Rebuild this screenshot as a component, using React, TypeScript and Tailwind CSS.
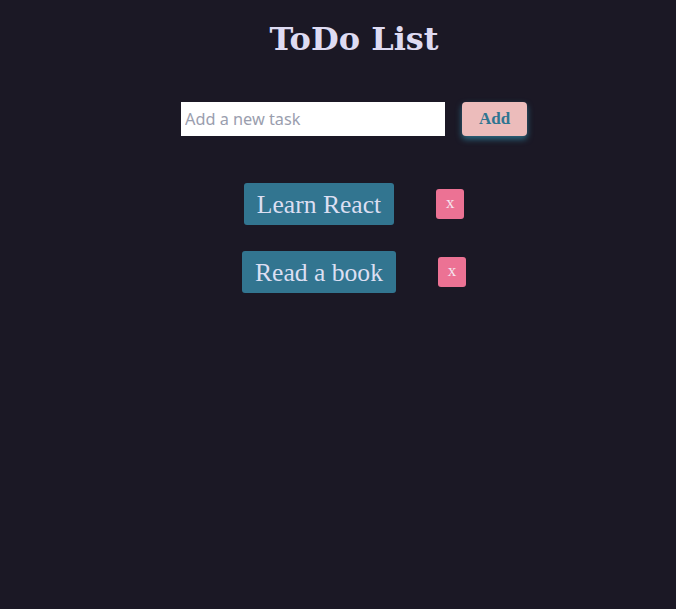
import { useState } from 'react'

type Task = { id: number; text: string }

const initialTasks: Task[] = [
  { id: 1, text: 'Learn React' },
  { id: 2, text: 'Read a book' },
]

const App = () => {
  const [tasks, setTasks] = useState<Task[]>(initialTasks)
  const [value, setValue] = useState('')

  const addTask = () => {
    if (!value.trim()) return
    setTasks([...tasks, { id: Date.now(), text: value.trim() }])
    setValue('')
  }

  return (
    <div className="min-h-screen bg-[#1b1825] pl-8">
      <div className="flex flex-col items-center pt-[21px]">
        <h1 className="text-[32px] font-bold leading-[37px] text-[#dedbf2] [font-family:'DejaVu_Serif',serif]">
          ToDo List
        </h1>

        <div className="mt-[44px] flex items-center gap-[17px]">
          <input
            className="h-[34px] w-[264px] bg-white px-1 text-[16.3px] text-gray-800 outline-none placeholder:text-[#9a9eae] [font-family:'Noto_Sans',sans-serif]"
            placeholder="Add a new task"
            value={value}
            onChange={(e) => setValue(e.target.value)}
          />
          <button
            onClick={addTask}
            className="h-[34px] w-[65px] rounded-[4px] bg-[#ecbcbb] text-[17px] font-bold text-[#2f7591] shadow-[0_3px_6px_#2c6d86] [font-family:'Liberation_Serif',serif]"
          >
            Add
          </button>
        </div>

        <ul className="mt-[47px] flex flex-col items-center gap-[26px]">
          {tasks.map((task) => (
            <li key={task.id} className="flex items-center gap-[42px]">
              <span className="flex h-[42px] items-center rounded-[3px] bg-[#327590] px-[13px] pt-[2px] text-[25.6px] text-[#dcdff2] [font-family:'Liberation_Serif',serif]">
                {task.text}
              </span>
              <button
                onClick={() => setTasks(tasks.filter((t) => t.id !== task.id))}
                className="flex h-[30px] w-[28px] items-center justify-center rounded-[3px] bg-[#ec7294] pb-[2px] text-[17px] text-[#f4e6f0] [font-family:'Liberation_Serif',serif]"
              >
                x
              </button>
            </li>
          ))}
        </ul>
      </div>
    </div>
  )
}

export default App
